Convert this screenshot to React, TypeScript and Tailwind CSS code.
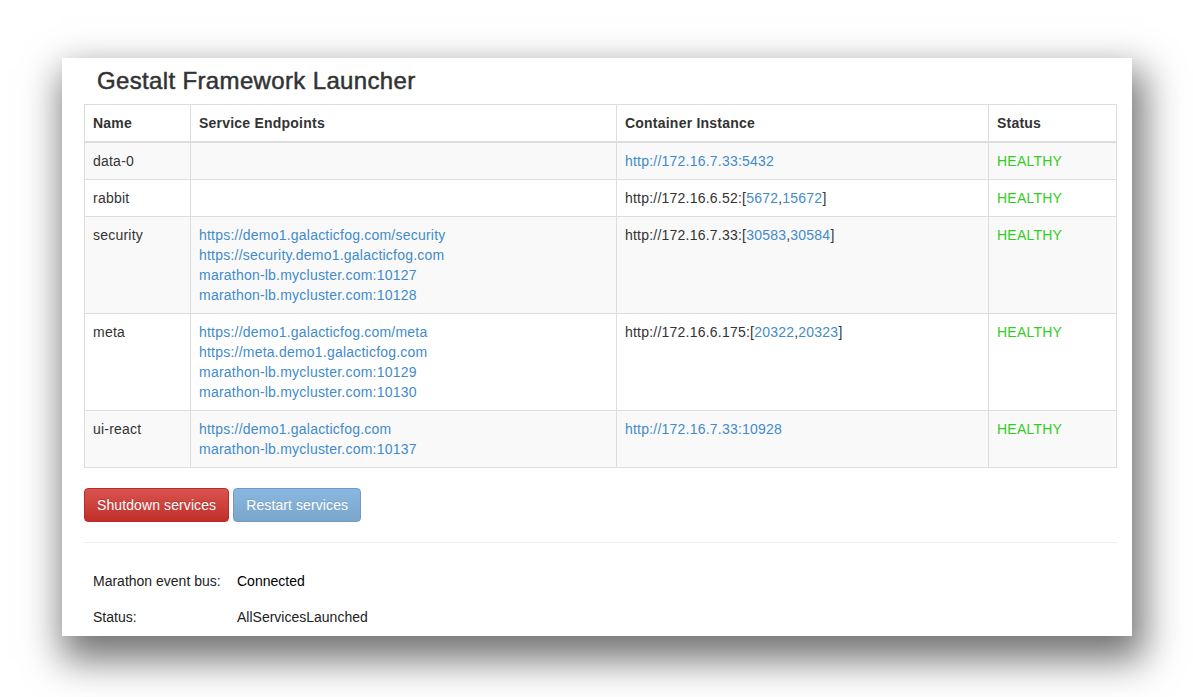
import React from "react";

type Service = {
  name: string;
  endpoints: string[];
  host: string;
  ports?: string[];
  link?: boolean;
};

const services: Service[] = [
  { name: "data-0", endpoints: [], host: "http://172.16.7.33:5432", link: true },
  { name: "rabbit", endpoints: [], host: "http://172.16.6.52:", ports: ["5672", "15672"] },
  {
    name: "security",
    endpoints: [
      "https://demo1.galacticfog.com/security",
      "https://security.demo1.galacticfog.com",
      "marathon-lb.mycluster.com:10127",
      "marathon-lb.mycluster.com:10128",
    ],
    host: "http://172.16.7.33:",
    ports: ["30583", "30584"],
  },
  {
    name: "meta",
    endpoints: [
      "https://demo1.galacticfog.com/meta",
      "https://meta.demo1.galacticfog.com",
      "marathon-lb.mycluster.com:10129",
      "marathon-lb.mycluster.com:10130",
    ],
    host: "http://172.16.6.175:",
    ports: ["20322", "20323"],
  },
  {
    name: "ui-react",
    endpoints: ["https://demo1.galacticfog.com", "marathon-lb.mycluster.com:10137"],
    host: "http://172.16.7.33:10928",
    link: true,
  },
];

const Link = ({ children }: { children: React.ReactNode }) => (
  <a className="text-[#428bca] no-underline">{children}</a>
);

const App = () => {
  return (
    <div className="min-h-[697px] bg-white pt-[58px] pl-[62px] font-['Liberation_Sans',Arial,sans-serif] text-[14px] leading-[20px] tracking-[0.22px] text-[#333]">
      <div className="w-[1070px] h-[578px] bg-white pt-[10px] pl-[22px] pr-[15px] shadow-[6px_18px_36px_6px_rgba(0,0,0,0.55)]">
        {/* TITLE */}
        <h3 className="pl-[13px] text-[24px] leading-[26px] font-normal text-[#333] mb-[10px] tracking-[0.35px] [-webkit-text-stroke:0.5px_#333]">
          Gestalt Framework Launcher
        </h3>

        {/* SERVICES TABLE */}
        <table className="w-[1033px] border-collapse border border-[#ddd] mb-[20px]">
          <thead>
            <tr>
              <th className="w-[106px] text-left font-bold p-2 border border-[#ddd] border-b-2">Name</th>
              <th className="w-[426px] text-left font-bold p-2 border border-[#ddd] border-b-2">Service Endpoints</th>
              <th className="w-[372px] text-left font-bold p-2 border border-[#ddd] border-b-2">Container Instance</th>
              <th className="text-left font-bold p-2 border border-[#ddd] border-b-2">Status</th>
            </tr>
          </thead>
          <tbody>
            {services.map((s, i) => (
              <tr key={s.name} className={i % 2 === 0 ? "bg-[#f9f9f9]" : "bg-white"}>
                <td className="align-top p-2 border border-[#ddd]">{s.name}</td>
                <td className="align-top p-2 border border-[#ddd]">
                  {s.endpoints.map((e) => (
                    <div key={e}>
                      <Link>{e}</Link>
                    </div>
                  ))}
                </td>
                <td className="align-top p-2 border border-[#ddd]">
                  {s.link ? (
                    <Link>{s.host}</Link>
                  ) : (
                    <span>
                      {s.host}[<Link>{s.ports![0]}</Link>,<Link>{s.ports![1]}</Link>]
                    </span>
                  )}
                </td>
                <td className="align-top p-2 border border-[#ddd] text-[#33cc22]">HEALTHY</td>
              </tr>
            ))}
          </tbody>
        </table>

        {/* ACTIONS */}
        <div className="flex gap-[4px]">
          <button className="h-[34px] px-3 rounded-[4px] border border-[#b92c28] bg-linear-to-b from-[#d9534f] to-[#c12e2a] text-white tracking-[0.1px] [text-shadow:0_-1px_0_rgba(0,0,0,0.2)]">
            Shutdown services
          </button>
          <button
            disabled
            className="h-[34px] px-3 rounded-[4px] border border-[#2b669a] bg-linear-to-b from-[#4a92d0] to-[#3477b0] text-white tracking-[0.1px] opacity-65 [text-shadow:0_-1px_0_rgba(0,0,0,0.2)]"
          >
            Restart services
          </button>
        </div>

        <hr className="w-[1033px] mt-[20px] mb-[20px] border-0 border-t border-[#eee]" />

        {/* STATUS */}
        <div className="pl-[9px] pt-[8px] flex flex-col gap-[16px] tracking-normal">
          <div className="flex">
            <span className="w-[144px] text-[#222]">Marathon event bus:</span>
            <span className="text-black">Connected</span>
          </div>
          <div className="flex">
            <span className="w-[144px] text-[#222]">Status:</span>
            <span className="text-[#222]">AllServicesLaunched</span>
          </div>
        </div>
      </div>
    </div>
  );
};

export default App;
